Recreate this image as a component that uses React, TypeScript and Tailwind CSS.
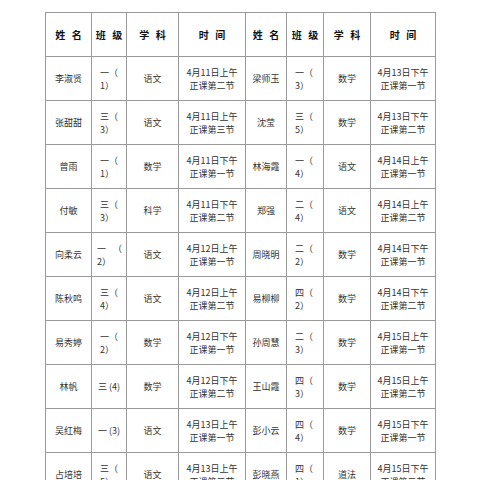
import type { ReactNode } from "react";

type Half = {
  name: string;
  cls: ReactNode;
  subject: string;
  date: string;
  period: string;
};

const two = (a: string, b: string) => (
  <div className="pl-[8px] text-left leading-[13px]">
    <div>{a}</div>
    <div>{b}</div>
  </div>
);

const rows: [Half, Half][] = [
  [
    { name: "李淑贤", cls: two("一（", "1）"), subject: "语文", date: "4月11日上午", period: "正课第二节" },
    { name: "梁师玉", cls: two("一（", "3）"), subject: "数学", date: "4月13日下午", period: "正课第一节" },
  ],
  [
    { name: "张甜甜", cls: two("三（", "3）"), subject: "语文", date: "4月11日上午", period: "正课第三节" },
    { name: "沈莹", cls: two("三（", "5）"), subject: "数学", date: "4月13日下午", period: "正课第二节" },
  ],
  [
    { name: "曾雨", cls: two("一（", "1）"), subject: "数学", date: "4月11日下午", period: "正课第一节" },
    { name: "林海霞", cls: two("一（", "4）"), subject: "语文", date: "4月14日上午", period: "正课第一节" },
  ],
  [
    { name: "付敏", cls: two("三（", "3）"), subject: "科学", date: "4月11日下午", period: "正课第二节" },
    { name: "郑强", cls: two("二（", "4）"), subject: "语文", date: "4月14日上午", period: "正课第二节" },
  ],
  [
    {
      name: "向柔云",
      cls: (
        <div className="pl-[5px] text-left leading-[13px]">
          <div className="flex w-[25px] justify-between">
            <span>一</span>
            <span>（</span>
          </div>
          <div>2）</div>
        </div>
      ),
      subject: "语文",
      date: "4月12日上午",
      period: "正课第一节",
    },
    { name: "周晓明", cls: two("二（", "2）"), subject: "数学", date: "4月14日下午", period: "正课第一节" },
  ],
  [
    { name: "陈秋鸣", cls: two("三（", "4）"), subject: "语文", date: "4月12日上午", period: "正课第二节" },
    { name: "易柳柳", cls: two("四（", "2）"), subject: "数学", date: "4月14日下午", period: "正课第二节" },
  ],
  [
    { name: "易秀婷", cls: two("一（", "2）"), subject: "数学", date: "4月12日下午", period: "正课第一节" },
    { name: "孙周慧", cls: two("二（", "3）"), subject: "数学", date: "4月15日上午", period: "正课第一节" },
  ],
  [
    { name: "林帆", cls: "三 (4)", subject: "数学", date: "4月12日下午", period: "正课第二节" },
    { name: "王山霞", cls: two("四（", "3）"), subject: "数学", date: "4月15日上午", period: "正课第二节" },
  ],
  [
    { name: "吴红梅", cls: "一 (3)", subject: "语文", date: "4月13日上午", period: "正课第一节" },
    { name: "彭小云", cls: two("四（", "4）"), subject: "数学", date: "4月15日下午", period: "正课第一节" },
  ],
  [
    { name: "占培培", cls: two("三（", "5）"), subject: "语文", date: "4月13日上午", period: "正课第二节" },
    { name: "彭晓燕", cls: two("四（", "1）"), subject: "道法", date: "4月15日下午", period: "正课第二节" },
  ],
];

const headers = ["姓 名", "班 级", "学 科", "时 间"];

const Cell = ({ children }: { children: ReactNode }) => (
  <div className="flex h-[44px] items-center justify-center border-r border-b border-[#9a9a9a] text-center">
    {children}
  </div>
);

const HalfCells = ({ h }: { h: Half }) => (
  <>
    <Cell>{h.name}</Cell>
    <div className="flex h-[44px] items-center justify-center border-r border-b border-[#9a9a9a]">
      <div className="w-full text-center">{h.cls}</div>
    </div>
    <Cell>{h.subject}</Cell>
    <Cell>
      <div className="leading-[13px]">
        <div>{h.date}</div>
        <div>{h.period}</div>
      </div>
    </Cell>
  </>
);

export default function App() {
  return (
    <div
      className="min-h-[480px] bg-white pt-[12px] pl-[45px] text-[9px] text-[#333]"
      style={{ fontFamily: '"Noto Sans CJK SC", "Noto Sans", sans-serif' }}
    >
      <div className="grid w-max grid-cols-[46px_35px_52px_67px_41px_37px_47px_65px] border-t border-l border-[#9a9a9a]">
        {[...headers, ...headers].map((h, i) => (
          <Cell key={i}>
            <span className="pl-[2px] text-[10px] font-bold tracking-[2px] text-[#111]">
              {h}
            </span>
          </Cell>
        ))}
        {rows.map(([l, r], i) => (
          <div key={i} className="contents">
            <HalfCells h={l} />
            <HalfCells h={r} />
          </div>
        ))}
      </div>
    </div>
  );
}
